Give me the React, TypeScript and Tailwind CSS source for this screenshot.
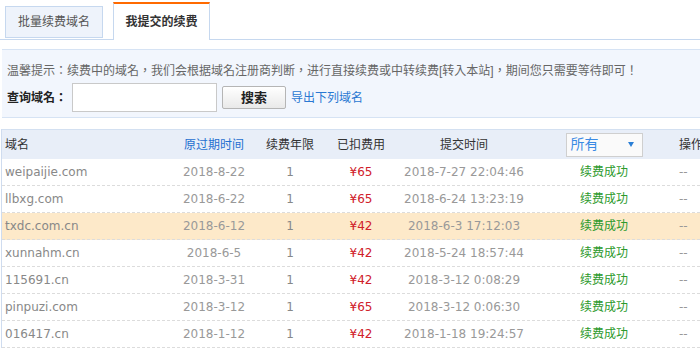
import React from 'react';

const rows = [
  { domain: 'weipaijie.com', expire: '2018-8-22', years: '1', fee: '¥65', time: '2018-7-27 22:04:46' },
  { domain: 'llbxg.com', expire: '2018-6-22', years: '1', fee: '¥65', time: '2018-6-24 13:23:19' },
  { domain: 'txdc.com.cn', expire: '2018-6-12', years: '1', fee: '¥42', time: '2018-6-3 17:12:03', hl: true },
  { domain: 'xunnahm.cn', expire: '2018-6-5', years: '1', fee: '¥42', time: '2018-5-24 18:57:44' },
  { domain: '115691.cn', expire: '2018-3-31', years: '1', fee: '¥42', time: '2018-3-12 0:08:29' },
  { domain: 'pinpuzi.com', expire: '2018-3-12', years: '1', fee: '¥65', time: '2018-3-12 0:06:30' },
  { domain: '016417.cn', expire: '2018-1-12', years: '1', fee: '¥42', time: '2018-1-18 19:24:57' },
];

const cols = 'grid grid-cols-[169px_86px_66px_76px_130px_150px_60px]';

export default function App() {
  return (
    <div className="w-[700px] h-[353px] overflow-hidden bg-white font-['Liberation_Sans','Noto_Sans_CJK_SC',sans-serif]">
      {/* Tabs */}
      <div className="flex items-end h-[40px] border-b border-[#c6d8ef] pl-[5px]">
        <div className="w-[98px] h-[32px] mb-[1px] flex items-center justify-center bg-[#eef3fb] border border-[#c6d8ef] text-[12px] text-[#555]">
          批量续费域名
        </div>
        <div className="ml-[10px] w-[97px] h-[38px] -mb-[1px] flex items-center justify-center bg-white border-x border-[#c6d8ef] border-t-2 border-t-[#ff6a00] text-[12px] font-bold text-[#333]">
          我提交的续费
        </div>
      </div>

      {/* Tip box */}
      <div className="mt-[9px] ml-[2px] h-[69px] bg-[#f2f6fd] border-t border-b border-[#d6e3f4] pl-[5px] pt-[13px]">
        <div className="text-[12px] leading-[16px] text-[#666] font-['Liberation_Sans','Noto_Sans_CJK_TC',sans-serif]">
          温馨提示：续费中的域名，我们会根据域名注册商判断，进行直接续费或中转续费[转入本站]，期间您只需要等待即可！
        </div>
        <div className="mt-[4px] flex items-center">
          <span className="text-[12px] font-bold text-[#222] w-[65px] font-['Liberation_Sans','Noto_Sans_CJK_TC',sans-serif]">查询域名：</span>
          <input className="w-[145px] h-[29px] bg-white border border-[#c9c9c9] outline-none" />
          <button className="ml-[5px] w-[64px] h-[23px] rounded-[2px] border border-[#b5b5b5] bg-gradient-to-b from-white to-[#e9e9e9] text-[13px] font-bold text-[#222] leading-none">
            搜索
          </button>
          <a className="ml-[5px] text-[12px] text-[#2a78d2] cursor-pointer">导出下列域名</a>
        </div>
      </div>

      {/* Table */}
      <div className="mt-[11px] ml-[1px] border-l border-[#cfdcef]">
        <div className={`${cols} h-[30px] items-center bg-[#e8eef8] border-t border-[#d3e0f1] text-[12px] text-[#333]`}>
          <div className="pl-[3px]">域名</div>
          <div className="text-center text-[#1f6fd0]">原过期时间</div>
          <div className="text-center">续费年限</div>
          <div className="text-center">已扣费用</div>
          <div className="text-center">提交时间</div>
          <div className="flex justify-center">
            <div className="w-[77px] h-[24px] bg-[#fafafa] border border-[#cfcfcf] flex items-center justify-between pl-[4px] pr-[8px]">
              <span className="text-[14px] text-[#3a8be4]">所有</span>
              <span className="w-0 h-0 border-l-[3px] border-r-[3px] border-t-[5px] border-l-transparent border-r-transparent border-t-[#2a7fd6]" />
            </div>
          </div>
          <div>操作</div>
        </div>
        {rows.map((r) => (
          <div
            key={r.domain}
            className={`${cols} h-[27px] items-center border-b border-dashed border-[#dcdcdc] text-[12px] font-['DejaVu_Sans','Noto_Sans_CJK_SC',sans-serif] ${r.hl ? 'bg-[#fde9c9]' : 'bg-white'}`}
          >
            <div className="pl-[3px] text-[#888]">{r.domain}</div>
            <div className="text-center text-[#999]">{r.expire}</div>
            <div className="text-center text-[#888]">{r.years}</div>
            <div className="text-center text-[#d0202a]">{r.fee}</div>
            <div className="text-center text-[#999]">{r.time}</div>
            <div className="text-center text-[#2c9a2c] font-['Liberation_Sans','Noto_Sans_CJK_SC',sans-serif]">续费成功</div>
            <div className="text-[#999]">--</div>
          </div>
        ))}
      </div>
    </div>
  );
}
